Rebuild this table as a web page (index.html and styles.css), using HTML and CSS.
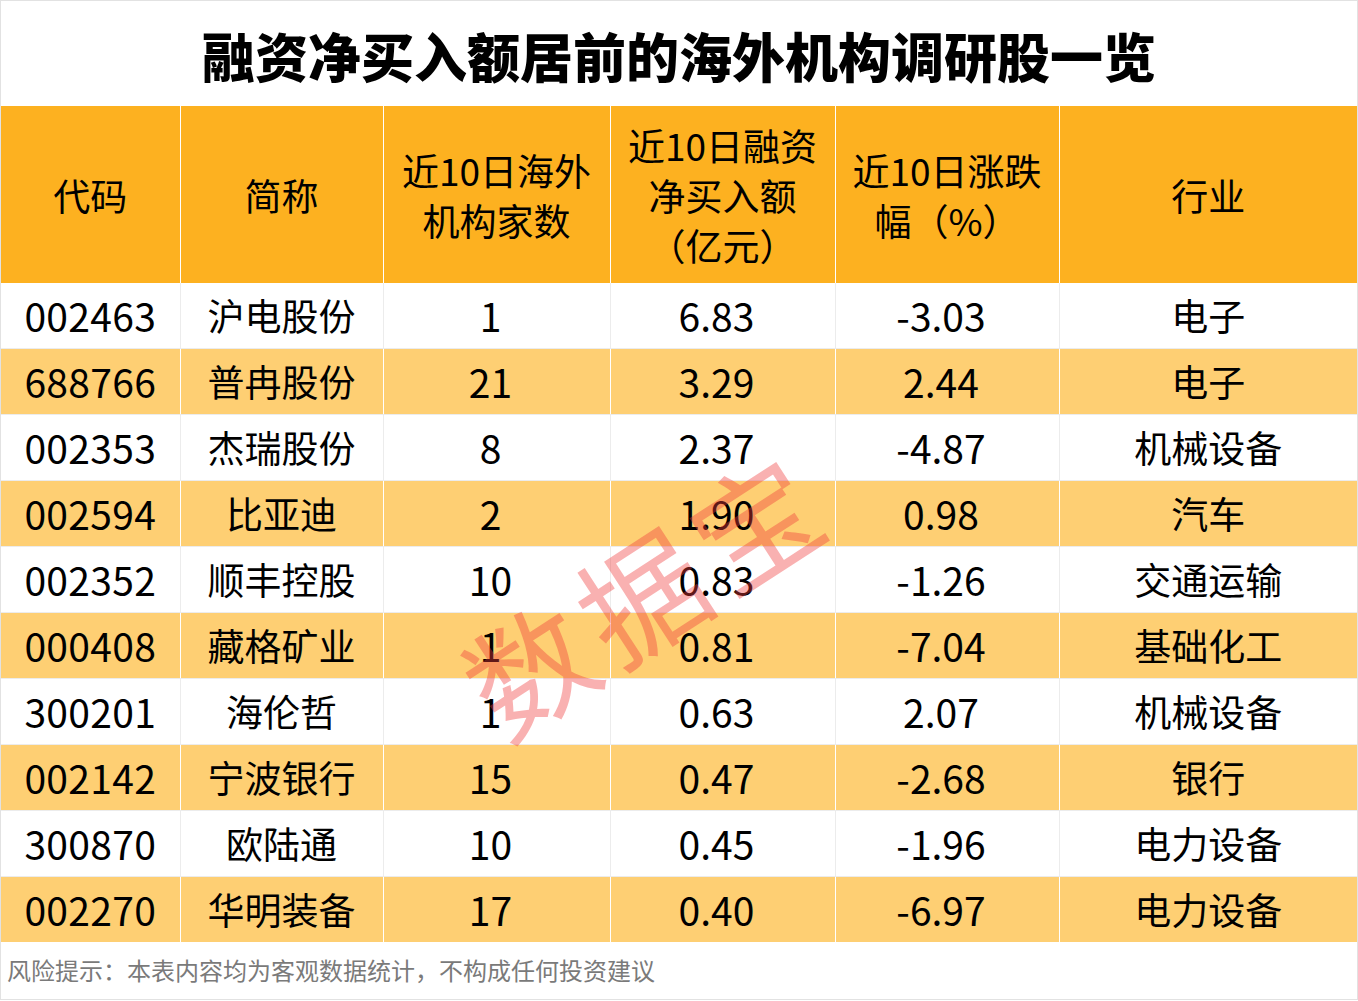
FILE: index.html
```html
<!DOCTYPE html>
<html lang="zh-CN">
<head>
<meta charset="utf-8">
<title>融资净买入额居前的海外机构调研股一览</title>
<link rel="stylesheet" href="styles.css">
</head>
<body>
<div class="card">
  <h1 class="title">融资净买入额居前的海外机构调研股一览</h1>
  <table class="grid">
    <colgroup>
      <col class="c1"><col class="c2"><col class="c3"><col class="c4"><col class="c5"><col class="c6">
    </colgroup>
    <thead>
      <tr>
        <th>代码</th>
        <th>简称</th>
        <th>近10日海外<br>机构家数</th>
        <th>近10日融资<br>净买入额<br>（亿元）</th>
        <th>近10日涨跌<br>幅（%）</th>
        <th>行业</th>
      </tr>
    </thead>
    <tbody>
      <tr><td class="code">002463</td><td>沪电股份</td><td class="num">1</td><td class="num">6.83</td><td class="num">-3.03</td><td>电子</td></tr>
      <tr class="alt"><td class="code">688766</td><td>普冉股份</td><td class="num">21</td><td class="num">3.29</td><td class="num">2.44</td><td>电子</td></tr>
      <tr><td class="code">002353</td><td>杰瑞股份</td><td class="num">8</td><td class="num">2.37</td><td class="num">-4.87</td><td>机械设备</td></tr>
      <tr class="alt"><td class="code">002594</td><td>比亚迪</td><td class="num">2</td><td class="num">1.90</td><td class="num">0.98</td><td>汽车</td></tr>
      <tr><td class="code">002352</td><td>顺丰控股</td><td class="num">10</td><td class="num">0.83</td><td class="num">-1.26</td><td>交通运输</td></tr>
      <tr class="alt"><td class="code">000408</td><td>藏格矿业</td><td class="num">1</td><td class="num">0.81</td><td class="num">-7.04</td><td>基础化工</td></tr>
      <tr><td class="code">300201</td><td>海伦哲</td><td class="num">1</td><td class="num">0.63</td><td class="num">2.07</td><td>机械设备</td></tr>
      <tr class="alt"><td class="code">002142</td><td>宁波银行</td><td class="num">15</td><td class="num">0.47</td><td class="num">-2.68</td><td>银行</td></tr>
      <tr><td class="code">300870</td><td>欧陆通</td><td class="num">10</td><td class="num">0.45</td><td class="num">-1.96</td><td>电力设备</td></tr>
      <tr class="alt"><td class="code">002270</td><td>华明装备</td><td class="num">17</td><td class="num">0.40</td><td class="num">-6.97</td><td>电力设备</td></tr>
    </tbody>
  </table>
  <p class="note">风险提示：本表内容均为客观数据统计，不构成任何投资建议</p>
  <div class="watermark"><span>数</span><span>据</span><span>宝</span></div>
</div>
</body>
</html>
```
FILE: styles.css
```css
html, body {
  margin: 0;
  padding: 0;
  background: #ffffff;
}
.card {
  position: relative;
  box-sizing: border-box;
  width: 1358px;
  height: 1000px;
  border: 1px solid #e2e2e2;
  overflow: hidden;
  font-family: "Noto Sans CJK SC", "Noto Sans", sans-serif;
  color: #000;
}
.title {
  margin: 0;
  height: 105px;
  line-height: 108px;
  text-align: center;
  font-size: 53px;
  font-weight: 900;
  letter-spacing: 0;
}
.grid {
  width: 1356px;
  table-layout: fixed;
  border-collapse: collapse;
}
.c1 { width: 179px; }
.c2 { width: 203px; }
.c3 { width: 227px; }
.c4 { width: 225px; }
.c5 { width: 224px; }
.c6 { width: 298px; }
.grid th {
  background: #fdb120;
  height: 177px;
  padding: 0;
  font-weight: 400;
  font-size: 37px;
  line-height: 50px;
  border-right: 1px solid #ffffff;
  text-align: center;
  vertical-align: middle;
}
.grid th:last-child, .grid td:last-child { border-right: none; }
.grid td {
  height: 63px;
  padding: 0 0 2px 0;
  font-size: 37px;
  text-align: center;
  vertical-align: middle;
  line-height: 40px;
  border-right: 1px solid #ececec;
  border-bottom: 1px solid #ececec;
}
.grid td.code {
  font-size: 39px;
  letter-spacing: 0.3px;
}
.grid td.num {
  font-size: 39px;
  padding-right: 12px;
}
.grid tr.alt td {
  background: #fecf73;
  border-right-color: #ffffff;
}
.grid tbody tr:last-child td { border-bottom: none; }
.note {
  margin: 0;
  padding-left: 6px;
  height: 54px;
  line-height: 56px;
  font-size: 24px;
  color: #7a7a7a;
}
.watermark {
  position: absolute;
  left: 474px;
  top: 636px;
  display: flex;
  gap: 10px;
  transform: rotate(-33deg);
  transform-origin: left center;
  font-size: 124px;
  font-weight: 400;
  line-height: 1;
  color: rgba(240, 60, 60, 0.4);
  pointer-events: none;
}
```
